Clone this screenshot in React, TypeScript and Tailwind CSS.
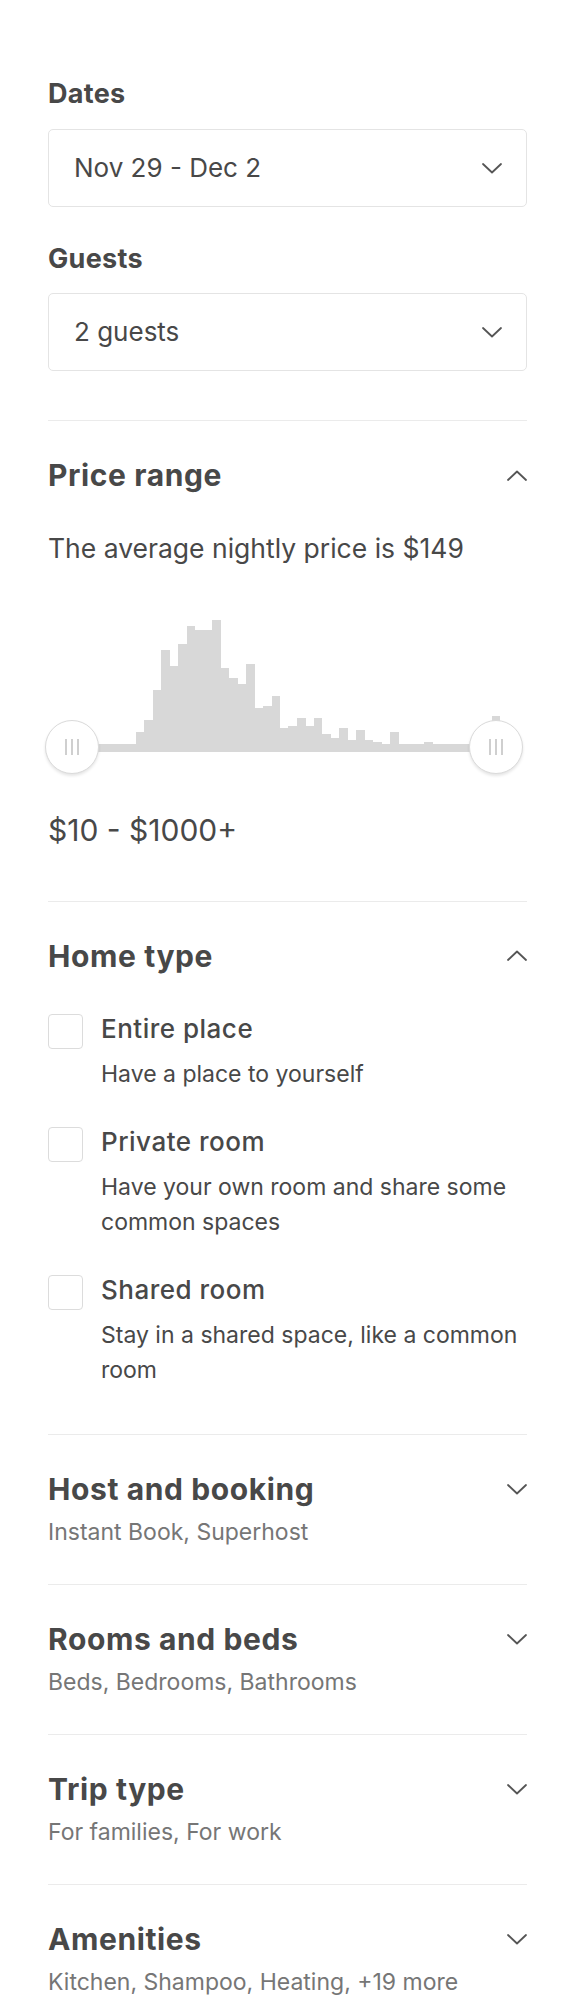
import React from 'react';

// bar tops measured on the page; the chart box starts at y=616
const barTops = [
  732, 720, 690, 650, 666, 644, 626, 630, 630, 620, 668, 678, 684, 664, 708, 706, 696,
  728, 726, 718, 726, 718, 734, 738, 728, 740, 730, 740, 742, 744, 732, 744, 744, 744,
  742, 744, 744, 744, 744, 744, 744, 744, 716,
];

const Chevron = ({ up = false }: { up?: boolean }) => (
  <svg width="20" height="11" viewBox="0 0 20 11" fill="none" className="shrink-0">
    <polyline
      points={up ? '1,10 10,1.5 19,10' : '1,1 10,9.5 19,1'}
      stroke="#555"
      strokeWidth="1.8"
      strokeLinecap="round"
      strokeLinejoin="round"
    />
  </svg>
);

const SelectBox = ({ label, value, first }: { label: string; value: string; first?: boolean }) => (
  <div className={first ? '' : 'mt-[36px]'}>
    <p className={`text-[27px] leading-[32px] font-bold tracking-[0.3px] ${first ? 'mb-[19px]' : 'mb-[18px]'}`}>{label}</p>
    <div className="h-[78px] border-[1.5px] border-[#e4e4e4] rounded-[5px] flex items-center justify-between pl-[25px] pr-[24px]">
      <span className="text-[26px] leading-[32px]">{value}</span>
      <Chevron />
    </div>
  </div>
);

const Handle = ({ left }: { left: string }) => (
  <div
    className={`absolute top-[104px] ${left} w-[54px] h-[54px] rounded-full bg-white border-[1.5px] border-[#dadada] shadow-[0_2px_3px_rgba(0,0,0,0.10)] flex items-center justify-center gap-[4.5px]`}
  >
    <span className="w-[1.5px] h-[16px] bg-[#cfcfcf]" />
    <span className="w-[1.5px] h-[16px] bg-[#cfcfcf]" />
    <span className="w-[1.5px] h-[16px] bg-[#cfcfcf]" />
  </div>
);

const PriceChart = () => (
  <div className="relative h-[160px] mt-[52px]">
    <svg width="479" height="160" className="absolute left-0 top-0" shapeRendering="crispEdges">
      <rect x="24" y="128" width="424" height="8" fill="#d8d8d8" />
      {barTops.map((top, i) => (
        <rect key={i} x={88 + i * 8.47} y={top - 616} width="8.6" height={136 - (top - 616)} fill="#d8d8d8" />
      ))}
    </svg>
    <Handle left="left-[-3px]" />
    <Handle left="left-[421px]" />
  </div>
);

const homeTypes = [
  { title: 'Entire place', desc: 'Have a place to yourself' },
  { title: 'Private room', desc: 'Have your own room and share some common spaces' },
  { title: 'Shared room', desc: 'Stay in a shared space, like a common room' },
];

const collapsed = [
  { title: 'Host and booking', sub: 'Instant Book, Superhost' },
  { title: 'Rooms and beds', sub: 'Beds, Bedrooms, Bathrooms' },
  { title: 'Trip type', sub: 'For families, For work' },
  { title: 'Amenities', sub: 'Kitchen, Shampoo, Heating, +19 more' },
];

const Heading = ({ children }: { children: React.ReactNode }) => (
  <h2 className="text-[30px] leading-[36px] font-bold tracking-[0.6px]">{children}</h2>
);

export default function App() {
  return (
    <div className="min-h-screen bg-white text-[#484848] font-['Inter','Noto_Sans',sans-serif] pl-[48px] pr-[37px] pt-[78px]">
      {/* dates & guests */}
      <div className="pb-[49px]">
        <SelectBox label="Dates" value="Nov 29 - Dec 2" first />
        <SelectBox label="Guests" value="2 guests" />
      </div>

      {/* price range */}
      <section className="border-t-[1.5px] border-[#ebebeb] pt-[36px] pb-[52.5px]">
        <div className="flex items-center justify-between">
          <Heading>Price range</Heading>
          <Chevron up />
        </div>
        <p className="mt-[39px] text-[26.5px] leading-[32px]">The average nightly price is $149</p>
        <PriceChart />
        <p className="mt-[36px] text-[30px] leading-[36px]">$10 - $1000+</p>
      </section>

      {/* home type */}
      <section className="border-t-[1.5px] border-[#ebebeb] pt-[36px] pb-[46.5px]">
        <div className="flex items-center justify-between">
          <Heading>Home type</Heading>
          <Chevron up />
        </div>
        <div className="mt-[40px] flex flex-col gap-[35px]">
          {homeTypes.map((h) => (
            <label key={h.title} className="flex items-start gap-[18px]">
              <span className="w-[35px] h-[35px] shrink-0 border-[1.5px] border-[#dcdcdc] rounded-[4px] bg-white" />
              <div className="flex-1">
                <p className="text-[26px] leading-[30px] font-medium tracking-[0.5px]">{h.title}</p>
                <p className="mt-[13px] text-[23px] leading-[35px]">{h.desc}</p>
              </div>
            </label>
          ))}
        </div>
      </section>

      {/* collapsed filters */}
      {collapsed.map((c) => (
        <section key={c.title} className="border-t-[1.5px] border-[#ebebeb] pt-[36px] pb-[37px]">
          <div className="flex items-center justify-between">
            <Heading>{c.title}</Heading>
            <Chevron />
          </div>
          <p className="mt-[10px] text-[23px] leading-[30px] text-[#767676]">{c.sub}</p>
        </section>
      ))}
    </div>
  );
}
